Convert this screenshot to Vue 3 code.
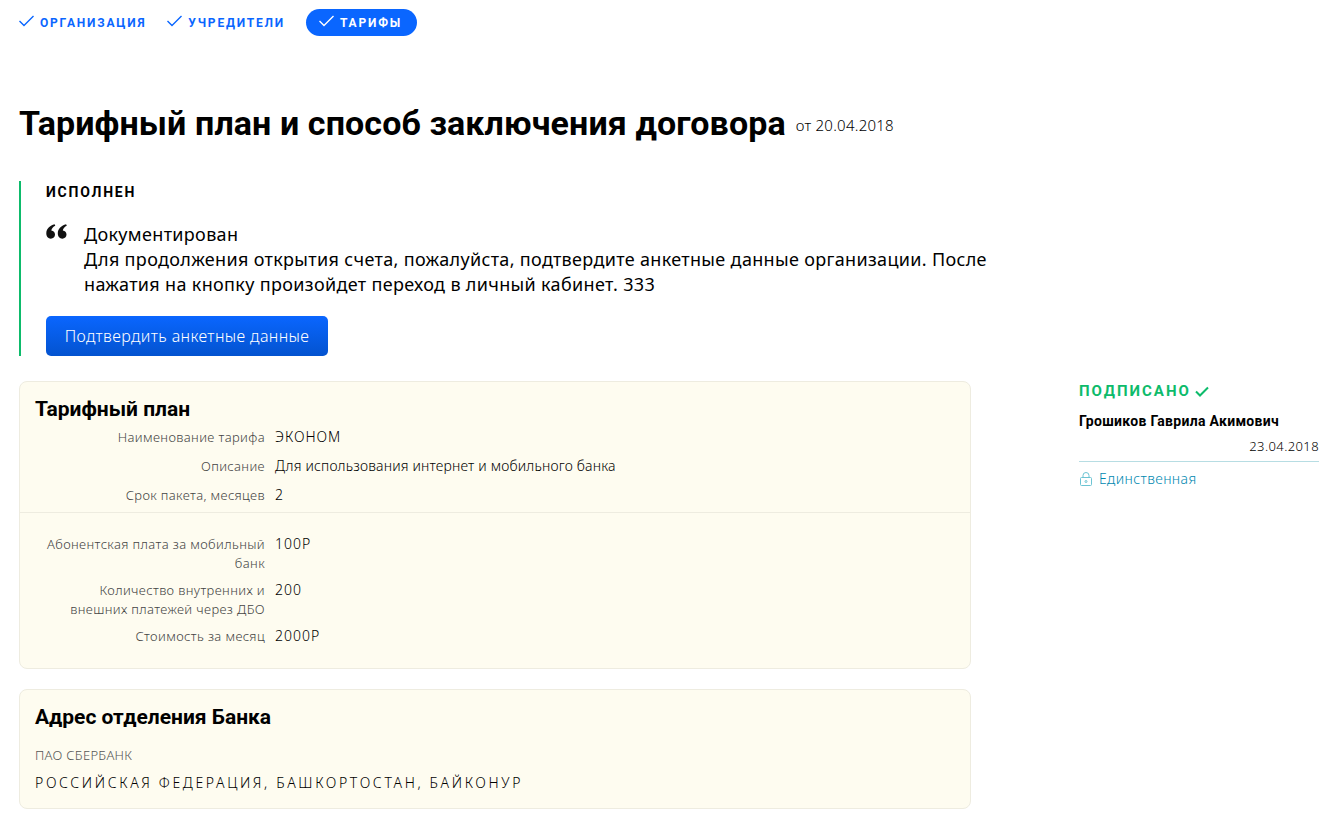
<template>
  <div class="page">
    <nav class="steps">
      <a v-for="step in steps" :key="step.name" class="step" :class="{ 'step--active': step.active }">
        <svg class="step__icon" width="15" height="12" viewBox="0 0 15 12"><path d="M0.5 6l4.500 4.500L14.500 1" fill="none" stroke="currentColor" stroke-width="1.4" /></svg>
        <span>{{ step.name }}</span>
      </a>
    </nav>

    <header class="title">
      <h1>Тарифный план и способ заключения договора</h1>
      <span class="title__date">от 20.04.2018</span>
    </header>

    <section class="status">
      <div class="status__name">ИСПОЛНЕН</div>
      <div class="status__quote">
        <svg class="status__mark" width="21" height="15" viewBox="0 0 21 15"><path d="M8.600 0.300C4 1.600 0.300 4.700 0.300 9.300C0.300 12.600 2.300 14.700 4.800 14.700C7.200 14.700 9 13 9 10.600C9 8.300 7.500 6.700 5.300 6.500C5.700 4.300 7.200 2.700 9.300 1.700ZM20.100 0.300C15.500 1.600 11.800 4.700 11.800 9.300C11.800 12.600 13.800 14.700 16.300 14.700C18.700 14.700 20.500 13 20.500 10.600C20.500 8.300 19 6.700 16.800 6.500C17.200 4.300 18.700 2.700 20.800 1.700Z" fill="#111" /></svg>
        <p>Документирован<br />Для продолжения открытия счета, пожалуйста, подтвердите анкетные данные организации. После нажатия на кнопку произойдет переход в личный кабинет. 333</p>
      </div>
      <button class="status__btn">Подтвердить анкетные данные</button>
    </section>

    <div class="columns">
      <main class="cards">
        <section class="card">
          <h2>Тарифный план</h2>
          <div class="rows rows--top">
            <div v-for="row in planRows" :key="row.label" class="row">
              <div class="row__label">{{ row.label }}</div>
              <div class="row__value" :class="{ 'row__value--wide': row.wide }">{{ row.value }}</div>
            </div>
          </div>
          <div class="rows rows--bottom">
            <div v-for="row in priceRows" :key="row.label" class="row">
              <div class="row__label">{{ row.label }}</div>
              <div class="row__value row__value--wide">{{ row.value }}</div>
            </div>
          </div>
        </section>

        <section class="card card--address">
          <h2>Адрес отделения Банка</h2>
          <div class="address__bank">ПАО СБЕРБАНК</div>
          <div class="address__text">РОССИЙСКАЯ ФЕДЕРАЦИЯ, БАШКОРТОСТАН, БАЙКОНУР</div>
        </section>
      </main>

      <aside class="sign">
        <div class="sign__state">
          ПОДПИСАНО
          <svg width="14" height="11" viewBox="0 0 14 11"><path d="M1 5.500l4 4L13 1.500" fill="none" stroke="#0dbb6b" stroke-width="2" /></svg>
        </div>
        <div class="sign__name">Грошиков Гаврила Акимович</div>
        <div class="sign__date">23.04.2018</div>
        <div class="sign__role">
          <svg width="14" height="15" viewBox="0 0 14 15" fill="none" stroke="#6cc4d3"><rect x="1.500" y="5.500" width="11" height="8" rx="1" /><path d="M4 5.500V3.500a3 3 0 0 1 6 0v2" /><circle cx="7" cy="9.500" r="1" /></svg>
          Единственная
        </div>
      </aside>
    </div>
  </div>
</template>

<script setup>
const steps = [
  { name: 'ОРГАНИЗАЦИЯ' },
  { name: 'УЧРЕДИТЕЛИ' },
  { name: 'ТАРИФЫ', active: true }
];

const planRows = [
  { label: 'Наименование тарифа', value: 'ЭКОНОМ', wide: true },
  { label: 'Описание', value: 'Для использования интернет и мобильного банка' },
  { label: 'Срок пакета, месяцев', value: '2', wide: true }
];

const priceRows = [
  { label: 'Абонентская плата за мобильный банк', value: '100Р' },
  { label: 'Количество внутренних и внешних платежей через ДБО', value: '200' },
  { label: 'Стоимость за месяц', value: '2000Р' }
];
</script>

<style>
body {
  background: #fff;
}
</style>

<style scoped>
.page {
  padding: 9px 11px 0 19px;
  height: 808px;
  overflow: hidden;
  font-family: "Noto Sans", "Open Sans", sans-serif;
  color: #000;
}

.steps {
  display: flex;
  gap: 21px;
  align-items: center;
  height: 27px;
}
.step {
  display: flex;
  align-items: center;
  gap: 6px;
  color: #0a66ff;
  font-family: Roboto, sans-serif;
  font-size: 12px;
  font-weight: 700;
  letter-spacing: 1.8px;
}
.step__icon {
  margin-top: -4px;
}
.step--active {
  background: #0a66ff;
  color: #fff;
  height: 27px;
  padding: 0 15px 0 13px;
  border-radius: 14px;
}

.title {
  display: flex;
  align-items: center;
  gap: 10px;
  margin-top: 62px;
}
.title h1 {
  margin: 0;
  font-family: Roboto, sans-serif;
  font-size: 34px;
  line-height: 50px;
  font-weight: 700;
  letter-spacing: 0.1px;
}
.title__date {
  font-size: 15px;
  font-weight: 300;
  margin-top: 3px;
  letter-spacing: 0.25px;
}

.status {
  margin-top: 33px;
  height: 175px;
  width: 990px;
  box-sizing: border-box;
  padding: 1px 0 0 25px;
  border-left: 2px solid #0dbb6b;
}
.status__name {
  font-family: Roboto, sans-serif;
  font-size: 14px;
  font-weight: 700;
  letter-spacing: 1.8px;
  line-height: 20px;
}
.status__quote {
  display: flex;
  gap: 17px;
  margin-top: 20px;
}
.status__mark {
  flex: none;
  margin-top: 2px;
}
.status__quote p {
  margin: 0;
  font-size: 18px;
  line-height: 25px;
  letter-spacing: 0.33px;
}
.status__btn {
  display: block;
  margin-top: 19px;
  width: 282px;
  height: 40px;
  border: 0;
  border-radius: 5px;
  background: linear-gradient(#0a66ff, #0353cf);
  color: #fff;
  font-family: inherit;
  font-size: 16px;
  font-weight: 300;
  letter-spacing: 0.4px;
}

.columns {
  display: flex;
  margin-top: 25px;
}
.cards {
  width: 952px;
  flex: none;
  display: flex;
  flex-direction: column;
  gap: 20px;
}
.card {
  background: #fefcf0;
  border: 1px solid #eeece0;
  border-radius: 8px;
  box-sizing: border-box;
  padding: 15px 15px 0;
}
.card h2 {
  margin: 0;
  font-family: Roboto, sans-serif;
  font-size: 21px;
  line-height: 24px;
  font-weight: 700;
}
.rows--top {
  margin: 0 -15px;
  padding: 7px 15px 0;
  border-bottom: 1px solid #eeece0;
}
.rows--top .row:last-child {
  margin-bottom: 6px;
}
.rows--bottom {
  padding: 22px 0 13px;
}
.row {
  display: flex;
  gap: 10px;
  min-height: 20px;
  margin-bottom: 9px;
}
.rows--bottom .row {
  margin-bottom: 8px;
}
.row__label {
  width: 222px;
  margin-left: 8px;
  flex: none;
  text-align: right;
  font-size: 13px;
  font-weight: 300;
  line-height: 19px;
  letter-spacing: 0.38px;
  color: #444;
}
.row__value {
  font-size: 14px;
  font-weight: 300;
  line-height: 18px;
  letter-spacing: 0.18px;
}
.row__value--wide {
  letter-spacing: 1px;
}
.card--address {
  height: 120px;
}
.address__bank {
  margin-top: 18px;
  font-size: 13px;
  font-weight: 300;
  letter-spacing: 0.3px;
  line-height: 17px;
  color: #555;
}
.address__text {
  margin-top: 9px;
  font-size: 14px;
  font-weight: 300;
  letter-spacing: 2.65px;
}

.sign {
  margin-left: 108px;
  width: 240px;
}
.sign__state {
  display: flex;
  align-items: center;
  gap: 4px;
  color: #0dbb6b;
  font-family: Roboto, sans-serif;
  font-size: 15px;
  font-weight: 700;
  letter-spacing: 2px;
  line-height: 20px;
}
.sign__name {
  margin-top: 10px;
  font-family: Roboto, sans-serif;
  font-size: 14px;
  font-weight: 700;
  line-height: 20px;
  letter-spacing: 0.3px;
}
.sign__date {
  margin-top: 5px;
  padding-bottom: 5px;
  text-align: right;
  font-size: 13px;
  font-weight: 300;
  line-height: 20px;
  letter-spacing: 0.4px;
  border-bottom: 1px solid #b7dde3;
}
.sign__role {
  display: flex;
  align-items: center;
  gap: 6px;
  margin-top: 7px;
  color: #0088b0;
  font-size: 14px;
  font-weight: 300;
  line-height: 20px;
  letter-spacing: 0.4px;
}
</style>
